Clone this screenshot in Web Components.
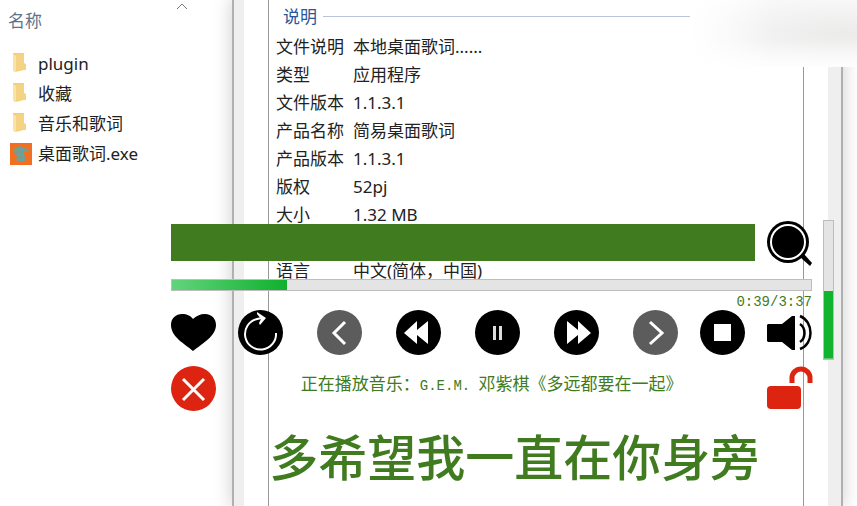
<!DOCTYPE html>
<html lang="zh-CN">
<head>
<meta charset="utf-8">
<title>桌面歌词</title>
<style>
:root {
  --green: #407b20;
  --ui: "Noto Sans", "Noto Sans CJK SC", sans-serif;
  --lyric: "Noto Sans CJK SC", sans-serif;
}
body {
  margin: 0;
  display: flex;
  position: relative;
  min-height: 100vh;
  overflow: hidden;
  background: #fff;
  color: #222;
  font: 17px/28px var(--ui);
}
</style>
</head>
<body>
<file-pane>
  <file-item kind="folder">plugin</file-item>
  <file-item kind="folder">收藏</file-item>
  <file-item kind="folder">音乐和歌词</file-item>
  <file-item kind="app">桌面歌词.exe</file-item>
</file-pane>

<property-sheet heading="说明">
  <property-row label="文件说明">本地桌面歌词......</property-row>
  <property-row label="类型">应用程序</property-row>
  <property-row label="文件版本">1.1.3.1</property-row>
  <property-row label="产品名称">简易桌面歌词</property-row>
  <property-row label="产品版本">1.1.3.1</property-row>
  <property-row label="版权">52pj</property-row>
  <property-row label="大小">1.32 MB</property-row>
  <property-row></property-row>
  <property-row label="语言">中文(简体，中国)</property-row>
</property-sheet>

<title-haze></title-haze>

<lyric-player>
  <span slot="time">0:39/3:37</span>
  <span slot="status">正在播放音乐：<lyric-latin>G.E.M.&nbsp;</lyric-latin>邓紫棋《多远都要在一起》</span>
  <span slot="lyric">多希望我一直在你身旁</span>
</lyric-player>

<script>
const ICONS = {
  folder: `<svg width="22" height="22" viewBox="0 0 22 22">
    <path fill="#f3cf78" d="M3 0h11v17l-9 2-2-2z"/>
    <path fill="#fbe3a4" d="M3 1l3 2v16l-3-2z"/>
    <path fill="#f5d384" d="M6 2l8-1v9l2 1v6H6z"/></svg>`,
  app: `<svg width="22" height="22" viewBox="0 0 22 22">
    <path fill="#f26f21" d="M0 0h22v22H0z"/>
    <path fill="#7c9a8c" d="M8 4l3-1 3 2 5 1-1 3-4-1v3l2 2-1 5-5 1-4-2 1-4-2-2 1-2-3 1 1-4z"/>
    <path fill="none" stroke="#4fb0b4" d="M4 8l5-3 4 3M8 12h6M9 15l1 3M13 14v4"/></svg>`,
  search: `<circle cx="21" cy="22" r="21"/>
    <circle cx="21" cy="22" r="17" fill="none" stroke="#fff" stroke-width="2"/>
    <path d="M33 37l4-3 8 9-2 3z"/>`,
  heart: `<path d="M22 41C14 34 0 27 0 15 0 8 5 4 11 4c5 0 9 2 11 5 3-3 7-5 12-5 7 0 11 5 11 11 0 11-14 19-23 26z"/>`,
  loop: `<circle cx="22.500" cy="22.500" r="22.500"/>
    <path fill="none" stroke="#fff" stroke-width="2" d="M38 23a15.500 15.500 0 1 1-19-14l5-1"/>
    <path fill="#fff" d="M19 2l9 6-6 7-1-2 2-4-4-5z"/>`,
  prev: `<circle cx="22.500" cy="22.500" r="22.500" fill="#5c5c5c"/>
    <path fill="none" stroke="#fff" stroke-width="3" d="M28 12L17 23l11 11"/>`,
  rewind: `<circle cx="22.500" cy="22.500" r="22.500"/>
    <path fill="#fff" d="M8 23l13-12v9l11-9v23l-11-9v9z"/>`,
  pause: `<circle cx="22.500" cy="22.500" r="22.500"/>
    <path fill="#ddd" d="M18 16h3v14h-3zM24 16h3v14h-3z"/>`,
  forward: `<circle cx="22.500" cy="22.500" r="22.500"/>
    <path fill="#fff" d="M37 23L24 11v9l-11-9v23l11-9v9z"/>`,
  next: `<circle cx="22.500" cy="22.500" r="22.500" fill="#5c5c5c"/>
    <path fill="none" stroke="#fff" stroke-width="3" d="M17 12l12 11-12 11"/>`,
  stop: `<circle cx="22.500" cy="22.500" r="22.500"/>
    <path fill="#fff" d="M14 14h17v17H14z"/>`,
  volume: `<path d="M1 14h14L25 6h3v34h-3l-10-8H1l-1-1V15z"/>
    <path fill="none" stroke="#000" stroke-width="2.500" d="M33 14c6 4 6 14 0 18M33 6c14 6 14 28 0 33"/>`,
  close: `<circle cx="22.500" cy="22.500" r="22.500" fill="#dc2410"/>
    <path fill="none" stroke="#fff" stroke-width="3" d="M12 13l21 21M33 13L12 34"/>`,
  unlock: `<rect x="0" y="20" width="34" height="23" rx="4" fill="#dc2410"/>
    <path fill="none" stroke="#dc2410" stroke-width="5" d="M25 17v-5a9 9 0 0 1 18 0v5"/>`,
};

class BaseElement extends HTMLElement {
  connectedCallback() {
    // An element can be moved, the root is only built once.
    if (!this.shadowRoot) {
      this.attachShadow({mode: 'open'});
      this.shadowRoot.innerHTML = this.render();
    }
  }
}

class FilePane extends BaseElement {
  render() {
    return `
      <style>
      :host { display: block; flex: 0 0 234px; }
      header {
        display: flex;
        justify-content: space-between;
        height: 49px;
        padding: 0 46px 0 8px;
        box-sizing: border-box;
        color: #5f7389;
        line-height: 42px;
      }
      svg { margin-top: 2px; }
      </style>
      <header>
        <span>名称</span>
        <svg width="12" height="8" viewBox="0 0 12 8"><path d="M1 7l5-5 5 5" fill="none" stroke="#777"/></svg>
      </header>
      <slot></slot>
    `;
  }
}

class FileItem extends BaseElement {
  render() {
    return `
      <style>
      :host {
        display: flex;
        align-items: center;
        gap: 6px;
        height: 30px;
        padding-left: 10px;
      }
      </style>
      ${ICONS[this.getAttribute('kind')]}
      <span><slot></slot></span>
    `;
  }
}

class PropertySheet extends BaseElement {
  render() {
    return `
      <style>
      :host {
        display: flex;
        flex: 1;
        position: relative;
        margin-right: 16px;
        padding: 0 24px;
        border: solid #efefef;
        border-width: 0 13px 0 10px;
        outline: 2px solid #b0b0b0;
        box-shadow: 0 0 18px 2px #0003;
      }
      section {
        flex: 1;
        border: solid #999;
        border-width: 0 1px;
        padding: 0 7px;
      }
      h2 {
        display: flex;
        align-items: center;
        gap: 6px;
        height: 33px;
        margin: 0;
        padding: 0 0 0 7px;
        color: #28569a;
        font: inherit;
      }
      h2::after { content: ''; flex: 1; height: 1px; background: #b9c5d8; }
      </style>
      <section>
        <h2>${this.getAttribute('heading')}</h2>
        <slot></slot>
      </section>
    `;
  }
}

class PropertyRow extends BaseElement {
  render() {
    return `
      <style>
      :host {
        display: grid;
        grid-template-columns: 77px 1fr;
        height: 28px;
      }
      </style>
      <span>${this.getAttribute('label') || ''}</span>
      <span><slot></slot></span>
    `;
  }
}

// Frosted corner over the title bar buttons.
class TitleHaze extends BaseElement {
  render() {
    return `
      <style>
      :host {
        position: absolute;
        top: 0;
        right: 0;
        width: 167px;
        height: 67px;
        background:
          linear-gradient(to right, #fff, #fff0 50%),
          linear-gradient(to bottom, #fff0 60%, #fffc),
          radial-gradient(ellipse at 92% 50%, #ebebea, #f2f2f2 40%, #f8f8f8 75%, #fff);
      }
      </style>
    `;
  }
}

class LyricLatin extends BaseElement {
  render() {
    return `<style>:host { font: 14px "Liberation Mono", monospace; }</style><slot></slot>`;
  }
}

class IconButton extends BaseElement {
  render() {
    return `
      <style>
      :host { display: block; flex: none; width: 45px; height: 45px; }
      button {
        display: block;
        width: 100%;
        height: 100%;
        padding: 0;
        border: 0;
        background: none;
        cursor: pointer;
      }
      svg { display: block; overflow: visible; }
      </style>
      <button type="button" aria-label="${this.getAttribute('label')}">
        <svg width="45" height="45" viewBox="0 0 45 45">${ICONS[this.getAttribute('icon')]}</svg>
      </button>
    `;
  }
}

class LevelBar extends BaseElement {
  render() {
    const value = this.getAttribute('value');
    const vertical = this.hasAttribute('vertical');
    const fill = vertical ? '#12b32f, #12b32f' : '#62d47c, #10b02e';
    return `
      <style>
      :host { display: block; height: 12px; }
      :host([vertical]) { height: 140px; }
      input {
        display: block;
        appearance: none;
        box-sizing: border-box;
        width: 100%;
        height: 100%;
        margin: 0;
        border: 1px solid #bdbdbd;
        background: linear-gradient(to right, ${fill}) no-repeat left bottom / ${vertical ? `100% ${value}%` : `${value}% 100%`} #e4e4e4;
      }
      input::-webkit-slider-thumb { appearance: none; width: 1px; height: 1px; opacity: 0; }
      </style>
      <input type="range" min="0" max="100" value="${value}" aria-label="${this.getAttribute('label')}">
    `;
  }
}

class LyricPlayer extends BaseElement {
  render() {
    return `
      <style>
      :host {
        display: grid;
        grid-template-columns: 1fr 11px;
        column-gap: 11px;
        position: absolute;
        top: 220px;
        left: 20%;
        right: 23px;
        color: var(--green);
      }
      .row { display: flex; align-items: center; }
      .search { gap: 12px; }
      .search input {
        flex: 1;
        min-width: 0;
        height: 37px;
        box-sizing: border-box;
        padding: 0 8px;
        border: 0;
        background: var(--green);
        color: #fff;
        font: inherit;
      }
      .seek { margin-top: 14px; }
      .time {
        height: 19px;
        font: 14px/22px "Liberation Mono", monospace;
        text-align: right;
      }
      .pair { display: flex; gap: 22px; }
      .transport {
        display: flex;
        flex: 1;
        justify-content: space-between;
        padding: 0 22px 0 34px;
      }
      .status { align-items: start; margin-top: 11px; }
      .status p {
        flex: 1;
        margin: 0;
        font: 17px/34px var(--lyric);
        text-align: center;
        white-space: nowrap;
      }
      .lyric {
        grid-column: 1 / -1;
        margin: 14px 0 0;
        padding-left: 23px;
        font: 500 49px/60px var(--lyric);
        text-align: center;
        white-space: nowrap;
      }
      </style>
      <div>
        <div class="row search">
          <input type="text" aria-label="搜索">
          <icon-button icon="search" label="搜索"></icon-button>
        </div>
        <level-bar class="seek" value="18" label="进度"></level-bar>
        <div class="time"><slot name="time"></slot></div>
        <div class="row">
          <div class="pair">
            <icon-button icon="heart" label="收藏"></icon-button>
            <icon-button icon="loop" label="循环"></icon-button>
          </div>
          <div class="transport">
            <icon-button icon="prev" label="上一首"></icon-button>
            <icon-button icon="rewind" label="快退"></icon-button>
            <icon-button icon="pause" label="暂停"></icon-button>
            <icon-button icon="forward" label="快进"></icon-button>
            <icon-button icon="next" label="下一首"></icon-button>
          </div>
          <div class="pair">
            <icon-button icon="stop" label="停止"></icon-button>
            <icon-button icon="volume" label="音量"></icon-button>
          </div>
        </div>
        <div class="row status">
          <icon-button icon="close" label="关闭"></icon-button>
          <p><slot name="status"></slot></p>
          <icon-button icon="unlock" label="锁定"></icon-button>
        </div>
      </div>
      <level-bar vertical value="49" label="音量"></level-bar>
      <p class="lyric"><slot name="lyric"></slot></p>
    `;
  }
}

customElements.define('file-pane', FilePane);
customElements.define('file-item', FileItem);
customElements.define('property-sheet', PropertySheet);
customElements.define('property-row', PropertyRow);
customElements.define('title-haze', TitleHaze);
customElements.define('lyric-latin', LyricLatin);
customElements.define('icon-button', IconButton);
customElements.define('level-bar', LevelBar);
customElements.define('lyric-player', LyricPlayer);
</script>
</body>
</html>
